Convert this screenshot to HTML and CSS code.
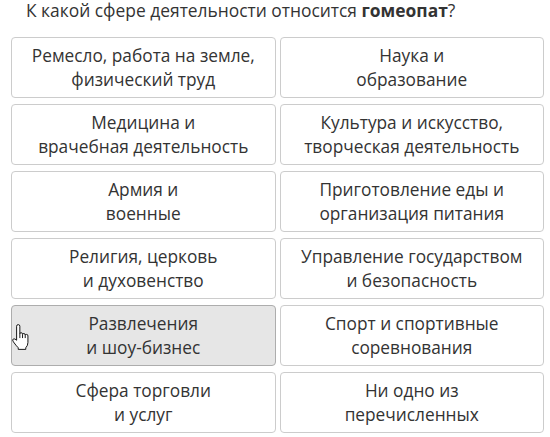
FILE: index.html
```html
<!DOCTYPE html>
<html lang="ru">
<head>
<meta charset="utf-8">
<title>Вопрос</title>
<link rel="stylesheet" href="styles.css">
</head>
<body>
<div class="quiz">
  <p class="question">К какой сфере деятельности относится <b>гомеопат</b>?</p>
  <div class="answers">
    <button class="answer">Ремесло, работа на земле,<br>физический труд</button>
    <button class="answer">Наука и<br>образование</button>
    <button class="answer">Медицина и<br>врачебная деятельность</button>
    <button class="answer">Культура и искусство,<br>творческая деятельность</button>
    <button class="answer">Армия и<br>военные</button>
    <button class="answer">Приготовление еды и<br>организация питания</button>
    <button class="answer">Религия, церковь<br>и духовенство</button>
    <button class="answer">Управление государством<br>и безопасность</button>
    <button class="answer answer-hover">Развлечения<br>и шоу-бизнес
      <svg class="cursor" viewBox="0 0 20 26" width="22" height="28" aria-hidden="true">
        <path d="M5,3 Q5,1.5 6.5,1.5 Q8,1.5 8,3 L8,10 Q8,9 9.25,9 Q10.5,9 10.5,10.5 Q10.5,9.8 11.75,9.8 Q13,9.8 13,11.2 Q13,10.6 14.25,10.6 Q15.5,10.6 15.5,12 L15.5,18 Q15.5,21 13.5,23 L13.5,24.5 L6.5,24.5 L6.5,23 Q4.5,21 2,17.5 Q0.6,15.5 2,14.8 Q3.3,14.3 5,16 Z" fill="#fff" stroke="#111" stroke-width="0.9" stroke-linejoin="round"/>
        <path d="M8,10 L8,14 M10.5,10.5 L10.5,14 M13,11.2 L13,14" fill="none" stroke="#111" stroke-width="0.9"/>
      </svg>
    </button>
    <button class="answer">Спорт и спортивные<br>соревнования</button>
    <button class="answer">Сфера торговли<br>и услуг</button>
    <button class="answer">Ни одно из<br>перечисленных</button>
  </div>
</div>
</body>
</html>
```
FILE: styles.css
```css
html, body {
  margin: 0;
  padding: 0;
  background: #fff;
}

.quiz {
  font-family: "Open Sans", "Noto Sans", sans-serif;
  color: #333;
  padding: 0 6px 0 11px;
}

.question {
  margin: 0 0 17px 15px;
  font-size: 17.4px;
  line-height: 20px;
}

.question b {
  font-weight: 700;
}

.answers {
  display: grid;
  grid-template-columns: 1fr 1fr;
  grid-auto-rows: 61px;
  column-gap: 4px;
  row-gap: 6px;
}

.answer {
  position: relative;
  display: flex;
  align-items: center;
  justify-content: center;
  margin: 0;
  padding: 0 8px;
  font-family: inherit;
  font-size: 17.3px;
  line-height: 24px;
  color: #333;
  text-align: center;
  background: #fff;
  border: 1px solid #ccc;
  border-radius: 4px;
}

.answer-hover {
  background: #e6e6e6;
  border-color: #adadad;
}

.cursor {
  position: absolute;
  left: -1px;
  top: 17px;
}
```
